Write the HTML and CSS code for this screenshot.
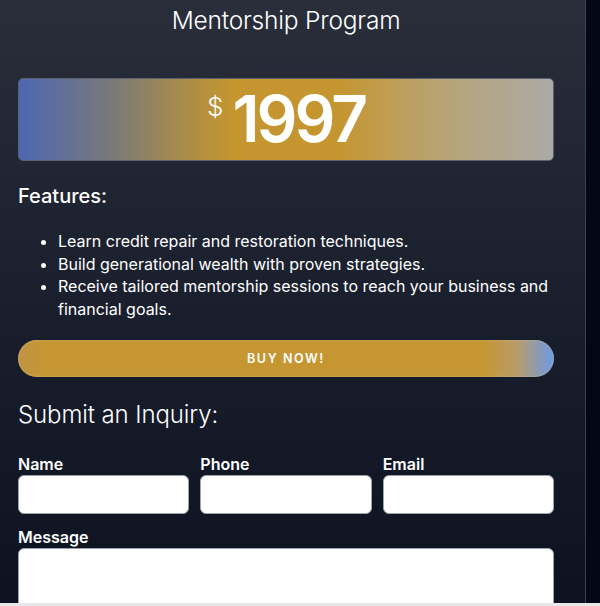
FILE: index.html
```html
<!DOCTYPE html>
<html>
<head>
<meta charset="utf-8">
<link rel="stylesheet" href="styles.css">
</head>
<body>
<div class="page">
  <main class="panel">
    <h1 class="title">Mentorship Program</h1>
    <div class="price"><span class="cur">$</span><span class="amount">1997</span></div>
    <h2 class="features-title">Features:</h2>
    <ul class="features">
      <li>Learn credit repair and restoration techniques.</li>
      <li>Build generational wealth with proven strategies.</li>
      <li>Receive tailored mentorship sessions to reach your business and financial goals.</li>
    </ul>
    <button class="buy">BUY NOW!</button>
    <h2 class="inquiry-title">Submit an Inquiry:</h2>
    <form class="form">
      <div class="row">
        <label class="field"><span class="label">Name</span><input class="input" type="text"></label>
        <label class="field"><span class="label">Phone</span><input class="input" type="text"></label>
        <label class="field"><span class="label">Email</span><input class="input" type="text"></label>
      </div>
      <label class="field"><span class="label">Message</span><textarea class="textarea"></textarea></label>
    </form>
  </main>
  <aside class="side"></aside>
</div>
</body>
</html>
```

FILE: styles.css
```css
html, body {
  margin: 0;
  padding: 0;
}
body {
  background: #e8e8ea;
  font-family: Inter, "Noto Sans", sans-serif;
  color: #ffffff;
}
.page {
  display: flex;
  height: 603px;
  overflow: hidden;
}
.panel {
  width: 586px;
  flex: none;
  box-sizing: border-box;
  border-right: 1px solid #3b404c;
  background: linear-gradient(180deg, #2a2e3b 0%, #1d2230 40%, #0d1221 100%);
  padding: 0 31px 0 18px;
}
.side {
  flex: 1;
  background: #030816;
}
.title {
  margin: 5px 0 0;
  text-align: center;
  font-weight: 300;
  font-size: 24.5px;
  line-height: 30px;
  letter-spacing: -0.2px;
}
.price {
  margin-top: 43px;
  height: 81px;
  border: 1px solid #5c6170;
  border-radius: 5px;
  background: linear-gradient(90deg, #4c67b2 0%, #7c7a78 18%, #a68b4c 30%, #c5962f 40%, #c5962f 60%, #bd9f5e 72%, #b3a684 85%, #abaaa4 100%);
  display: flex;
  justify-content: center;
  align-items: flex-start;
}
.cur {
  font-size: 26px;
  font-weight: 300;
  margin-top: 12px;
  margin-right: 9px;
}
.amount {
  font-size: 64px;
  font-weight: 600;
  line-height: 80px;
  letter-spacing: -3px;
}
.features-title {
  margin: 22px 0 0;
  font-size: 20px;
  font-weight: 500;
  line-height: 26px;
}
.features {
  margin: 21px 0 0;
  padding-left: 40px;
  font-size: 16px;
  line-height: 22.7px;
}
.buy {
  display: block;
  width: 100%;
  margin-top: 19px;
  height: 37px;
  border: none;
  border-radius: 19px;
  background: linear-gradient(90deg, #c09544 0%, #c59632 5%, #c59632 87%, #b89b69 93%, #6c9be6 100%);
  box-shadow: inset 0 0 3px rgba(210, 195, 160, 0.6);
  color: #fff;
  font-family: Inter, sans-serif;
  font-weight: 600;
  font-size: 12.5px;
  letter-spacing: 1.6px;
}
.inquiry-title {
  margin: 22px 0 0;
  font-size: 24px;
  font-weight: 300;
  line-height: 32px;
  letter-spacing: -0.1px;
}
.form {
  margin-top: 23px;
}
.row {
  display: grid;
  grid-template-columns: repeat(3, minmax(0, 1fr));
  gap: 11px;
}
.field {
  display: flex;
  flex-direction: column;
  margin-bottom: 13px;
  min-width: 0;
}
.label {
  font-size: 16px;
  font-weight: 600;
  line-height: 20px;
  margin-bottom: 1px;
}
.input {
  width: 100%;
  min-width: 0;
  height: 39px;
  box-sizing: border-box;
  border: 1px solid #9ca3af;
  border-radius: 6px;
  background: #fff;
}
.textarea {
  height: 100px;
  box-sizing: border-box;
  border: 1px solid #9ca3af;
  border-radius: 6px;
  background: #fff;
  resize: none;
}
```
